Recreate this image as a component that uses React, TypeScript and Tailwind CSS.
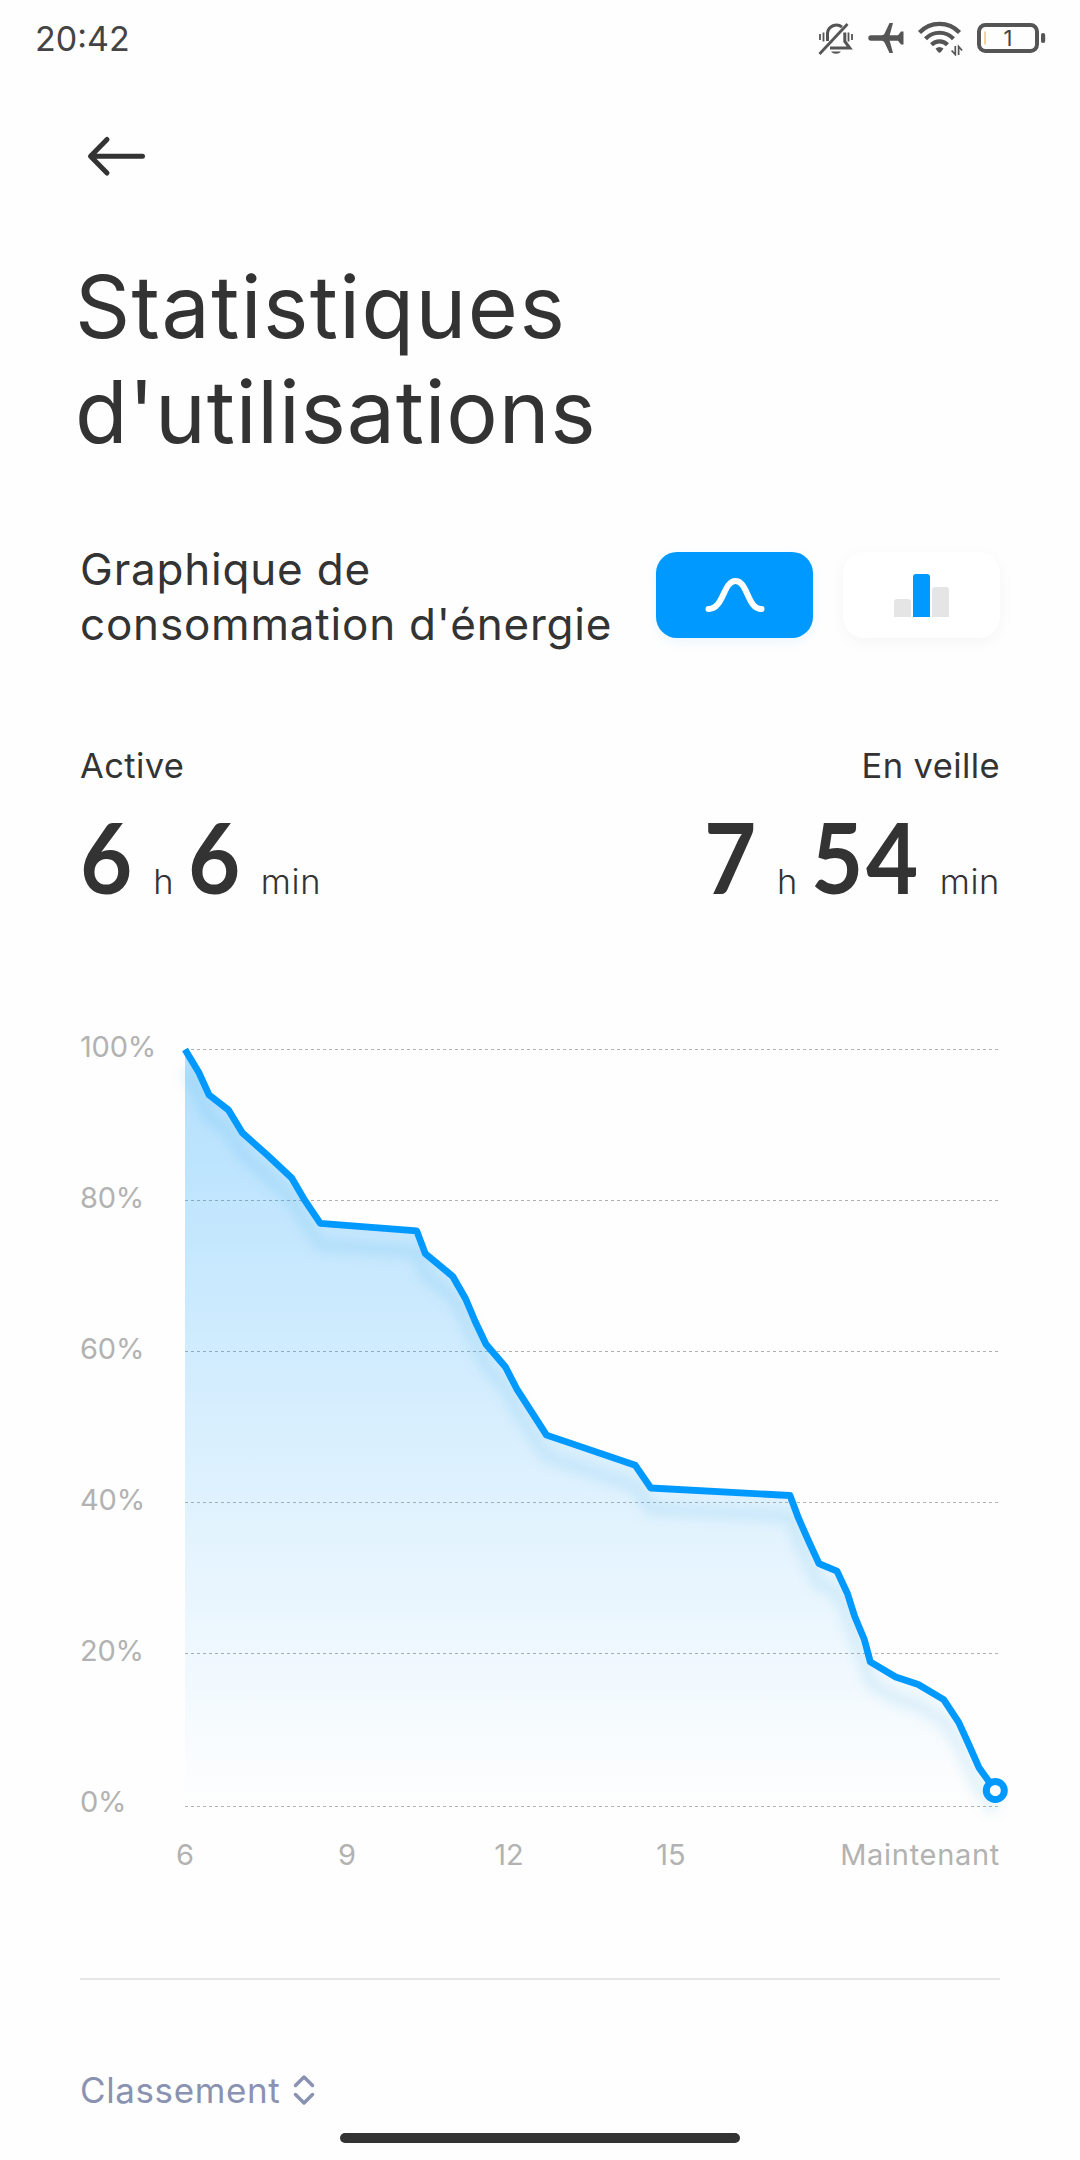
import type { ReactNode } from "react";

const BLUE = "#0099ff";

// [x offset inside the plot, battery level in %]
const levels: [number, number][] = [
  [0, 100], [13.7, 97], [24, 94], [43.5, 92], [57.3, 89], [82.5, 86], [106.7, 83], [120, 80],
  [135.3, 77], [231.7, 76], [240.3, 73], [267.7, 70], [280.7, 67], [290.3, 64], [301, 61],
  [320.5, 58], [332.2, 55], [361.5, 49], [383.8, 48], [450.3, 45], [465.8, 42], [605, 41],
  [613.5, 38], [623.5, 35], [634, 32], [652, 31], [662.5, 28], [669.7, 25], [679.2, 22],
  [685.3, 19], [710.7, 17], [733.3, 16], [758.7, 14], [773.7, 11], [784, 8], [794, 5], [810.3, 2],
];

const gridLines = [0.5, 151.5, 302.5, 453.5, 604.5, 757.5];
const yLabels = ["100%", "80%", "60%", "40%", "20%", "0%"];

const toY = (level: number) => 0.5 + (100 - level) * 7.56;
const line = levels.map(([x, level]) => `${x},${toY(level).toFixed(1)}`).join(" ");

const StatusBar = () => (
  <header className="flex h-[76px] items-center justify-between pl-[35px] pr-[33px]">
    <span className="mt-[2px] text-[34px] font-[370] leading-none text-[#444]">20:42</span>
    <div className="flex items-center text-[#555]">
      <svg width="36" height="36" viewBox="0 0 36 36" fill="none" stroke="currentColor">
        <path d="M9.5 21v-8a9 9 0 0 1 14.5-6" strokeWidth="3" />
        <path d="M26.8 12.5v9l5 6.5H12" strokeWidth="3" />
        <path d="M1.5 34 29.5 4" strokeWidth="2.8" />
        <path d="M2 14v6M5.5 12.5v9M30.5 12.5v9M34 14v6" strokeWidth="1.8" />
        <path d="M13 31.5h10a5.5 4 0 0 1-10 0z" fill="currentColor" stroke="none" />
      </svg>
      <svg className="ml-[14px]" width="36" height="32" viewBox="0 0 36 32" fill="currentColor">
        <path d="M3 13.3h10.5c2 0 2.6-1 3.3-2.3L21.5 1H25l-3.3 12.3H30L33 9.5h2.5v13H33l-3-3.8h-8.3L25 31h-3.5l-4.7-10c-.7-1.3-1.3-2.3-3.3-2.3H3a2.7 2.7 0 0 1 0-5.4z" />
      </svg>
      <svg className="ml-[13px]" width="46" height="36" viewBox="0 0 46 36" fill="none" stroke="currentColor">
        <path d="M2.5 12.5a27.5 27.5 0 0 1 40 0" strokeWidth="4.2" />
        <path d="M8.5 18.7a19.5 19.5 0 0 1 28 0" strokeWidth="4.2" />
        <path d="M14.5 24.7a11.5 11.5 0 0 1 16 0" strokeWidth="4.2" />
        <path d="M18.5 28.5q4-3.2 8 0l-2.5 3.500q-1.5 1.5-3 0z" fill="currentColor" stroke="none" />
        <path d="M38.3 26v8.5l-3.7-4M41.6 35v-8.5l3.500 4" strokeWidth="1.7" />
      </svg>
      <svg className="ml-[14px]" width="70" height="32" viewBox="0 0 70 32">
        <rect x="2" y="3" width="58" height="26" rx="6.5" fill="none" stroke="currentColor" strokeWidth="4" />
        <rect x="64" y="11" width="4.2" height="10" rx="2" fill="currentColor" />
        <rect x="7.5" y="9.5" width="1" height="13" fill="#e2ad3c" />
        <text x="31" y="24" textAnchor="middle" fontSize="22" fill="#444">1</text>
      </svg>
    </div>
  </header>
);

// negative margin takes back the width lost to the horizontal squeeze
const Digits = ({ children, wide }: { children: ReactNode; wide?: boolean }) => (
  <span
    className={`inline-block origin-left scale-x-[0.93] font-['Lato'] text-[97px] font-bold leading-[88px] ${
      wide ? "-mr-[11px] tracking-[3px]" : "-mr-[4px]"
    }`}
  >
    {children}
  </span>
);

const Duration = ({ label, hours, minutes, end }: { label: string; hours: string; minutes: string; end?: boolean }) => (
  <div className={end ? "text-right" : ""}>
    <p className="text-[34.5px] leading-[42px] tracking-[0.4px]">{label}</p>
    <div className={`mt-[26px] flex h-[88px] items-baseline ${end ? "justify-end" : ""}`}>
      <Digits wide={hours.length > 1}>{hours}</Digits>
      <span className="ml-[21px] mr-[14px] text-[34.5px] font-[350]">h</span>
      <Digits wide={minutes.length > 1}>{minutes}</Digits>
      <span className="ml-[21px] text-[34.5px] font-[350] tracking-[0.6px]">min</span>
    </div>
  </div>
);

const BatteryChart = () => (
  <section className="mt-[148px]">
    <div className="flex">
      <div className="-mt-[16px] w-[105px] text-[29px] tracking-[-0.2px] text-[#b2b2b2]">
        {yLabels.map((label) => (
          <div key={label} className="h-[151px] leading-[28px] last:h-[28px]">{label}</div>
        ))}
      </div>
      <svg className="overflow-visible" width="813" height="758" viewBox="0 0 813 758" fill="none">
        <defs>
          <linearGradient id="area" x1="0" y1="0" x2="0" y2="1">
            <stop offset="0" stopColor={BLUE} stopOpacity="0.3" />
            <stop offset="1" stopColor={BLUE} stopOpacity="0" />
          </linearGradient>
          <filter id="soft" x="-10%" y="-10%" width="120%" height="120%">
            <feGaussianBlur stdDeviation="6" />
          </filter>
        </defs>
        {gridLines.map((y) => (
          <path key={y} d={`M0 ${y}H813`} stroke="#b0b0b0" strokeDasharray="3 3" />
        ))}
        <polygon points={`0,757 ${line} 810.3,757`} fill="url(#area)" />
        <polyline points={line} transform="translate(0 21)" stroke="#0088cc" strokeOpacity="0.1" strokeWidth="13" filter="url(#soft)" />
        <polyline points={line} stroke={BLUE} strokeWidth="6.8" strokeLinejoin="round" />
        <circle cx="810.3" cy="741.5" r="9" fill="#fff" stroke={BLUE} strokeWidth="7" />
      </svg>
    </div>
    <div className="mt-[17px] flex pl-[24px] text-[29px] leading-[44px] text-[#b2b2b2]">
      <span className="w-[162px] text-center">6</span>
      <span className="w-[162px] text-center">9</span>
      <span className="w-[162px] text-center">12</span>
      <span className="w-[162px] text-center">15</span>
      <span className="ml-auto tracking-[0.7px]">Maintenant</span>
    </div>
  </section>
);

const App = () => (
  <div className="flex h-[2160px] w-[1080px] flex-col overflow-hidden bg-[#fefefe] font-['Inter','Roboto',sans-serif] text-[#333]">
    <StatusBar />
    <main className="px-[80px]">
      <svg className="ml-[6px] mt-[58px]" width="62" height="44" viewBox="0 0 62 44" fill="none" stroke="#333" strokeWidth="5" strokeLinecap="round" strokeLinejoin="round">
        <path d="M56.5 22.3H5M21 5.5 4.5 22.3 21 39" />
      </svg>

      <h1 className="-ml-[5px] mt-[77px] text-[86px] leading-[105px]">
        <span className="tracking-[1.4px]">Statistiques</span>
        <br />
        <span className="tracking-[0.8px]">d'utilisations</span>
      </h1>

      <div className="mt-[77px] flex h-[110px] justify-between">
        <h2 className="text-[44px] font-[380] leading-[55px] tracking-[0.8px]">
          Graphique de
          <br />
          consommation d'énergie
        </h2>
        <div className="mt-[10px] flex gap-[30px]">
          <button className="flex h-[86px] w-[157px] items-center justify-center rounded-[21px] bg-[#0099ff] shadow-[0_4px_12px_rgba(0,153,255,0.08)]">
            <svg width="60" height="36" viewBox="0 0 60 36" fill="none" stroke="#fff" strokeWidth="6" strokeLinecap="round">
              <path d="M3.5 32C19 32 18 4 30.5 4S42 32 56.5 32" />
            </svg>
          </button>
          <button className="flex h-[86px] w-[157px] items-center justify-center rounded-[21px] bg-white shadow-[0_4px_16px_rgba(0,0,0,0.04)]">
            <div className="flex items-end gap-[2px]">
              <div className="h-[18px] w-[17px] rounded-t-[3px] bg-[#e5e5e5]" />
              <div className="h-[43px] w-[17px] rounded-t-[3px] bg-[#0099ff]" />
              <div className="h-[30px] w-[17px] rounded-t-[3px] bg-[#e5e5e5]" />
            </div>
          </button>
        </div>
      </div>

      <div className="mt-[93px] flex justify-between">
        <Duration label="Active" hours="6" minutes="6" />
        <Duration label="En veille" hours="7" minutes="54" end />
      </div>

      <BatteryChart />

      <hr className="mt-[101px] border-0 border-t-2 border-[#e6e6e6]" />

      <button className="mt-[88px] flex items-center text-[35px] font-[380] leading-[44px] tracking-[0.6px] text-[#8a92b2]">
        Classement
        <svg className="ml-[13px]" width="22" height="32" viewBox="0 0 22 32" fill="none" stroke="currentColor" strokeWidth="3.5" strokeLinecap="round" strokeLinejoin="round">
          <path d="M2.5 11.5 11 3l8.5 8.5M2.5 20.5 11 29l8.5-8.5" />
        </svg>
      </button>
    </main>
    <div className="mx-auto mb-[17px] mt-auto h-[10px] w-[400px] rounded-full bg-[#333]" />
  </div>
);

export default App;
